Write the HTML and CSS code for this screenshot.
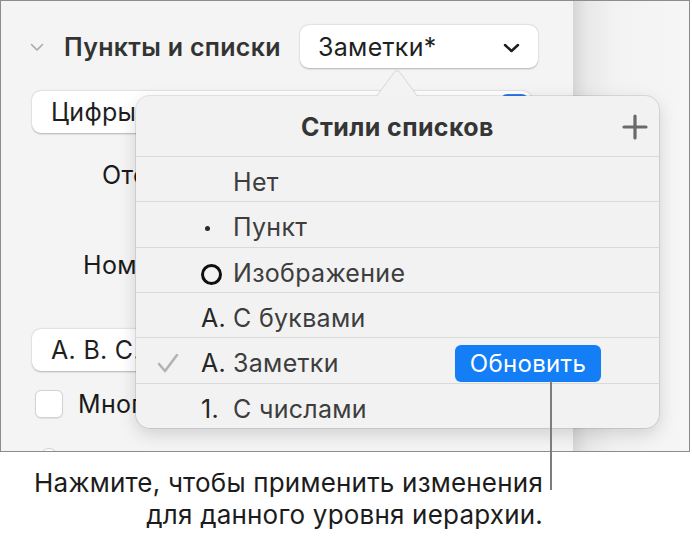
FILE: index.html
```html
<!DOCTYPE html>
<html lang="ru">
<head>
<meta charset="utf-8">
<title>Стили списков</title>
<link rel="stylesheet" href="styles.css">
</head>
<body>
<div class="page">
  <div class="frame">
    <div class="sidebar">
      <div class="row-head">
        <svg class="disclosure" width="14" height="9" viewBox="0 0 14 9"><path d="M1.5 1.5 L7 7 L12.5 1.5" fill="none" stroke="#a9a9a9" stroke-width="1.6" stroke-linecap="round" stroke-linejoin="round"/></svg>
        <span class="section-title">Пункты и списки</span>
        <div class="popup popup-style">
          <span>Заметки*</span>
          <svg class="popup-chevron" width="17" height="10" viewBox="0 0 17 10"><path d="M2 2 L8.5 8 L15 2" fill="none" stroke="#1e1e1e" stroke-width="2.5" stroke-linecap="round" stroke-linejoin="round"/></svg>
        </div>
      </div>
      <div class="row-type">
        <div class="popup popup-type">
          <span>Цифры</span>
          <span class="popup-blue"></span>
        </div>
      </div>
      <div class="label label-indent">Отступ</div>
      <div class="label label-num">Номер</div>
      <div class="row-format">
        <div class="popup popup-format"><span>А. В. С.</span></div>
      </div>
      <div class="row-check">
        <span class="checkbox"></span>
        <span class="check-label">Много</span>
      </div>
      <div class="row-radio"><span class="radio"></span></div>
    </div>
    <div class="canvas"></div>

    <div class="popover">
      <svg class="popover-arrow" width="42" height="28" viewBox="0 0 42 28"><path d="M0 28 L18 3.5 Q21 0 24 3.5 L42 28 Z" fill="#f3f3f3" stroke="#d6d6d6" stroke-width="1"/><rect x="0" y="27" width="42" height="2" fill="#f3f3f3"/></svg>
      <div class="pop-header">
        <span class="pop-title">Стили списков</span>
        <svg class="plus" width="26" height="26" viewBox="0 0 26 26"><path d="M13 2 V24 M2 13 H24" stroke="#6a6a6a" stroke-width="3.2" stroke-linecap="round"/></svg>
      </div>
      <div class="pop-row"><span class="c-check"></span><span class="c-mark"></span><span class="c-label">Нет</span></div>
      <div class="pop-row"><span class="c-check"></span><span class="c-mark"><span class="bullet"></span></span><span class="c-label">Пункт</span></div>
      <div class="pop-row"><span class="c-check"></span><span class="c-mark"><span class="ring"></span></span><span class="c-label">Изображение</span></div>
      <div class="pop-row"><span class="c-check"></span><span class="c-mark">А.</span><span class="c-label">С буквами</span></div>
      <div class="pop-row">
        <span class="c-check"><svg width="22" height="20" viewBox="0 0 22 20"><path d="M2 11 L8 18 L20 2" fill="none" stroke="#b3b3b3" stroke-width="2.6" stroke-linecap="round" stroke-linejoin="round"/></svg></span>
        <span class="c-mark">А.</span><span class="c-label">Заметки</span>
        <span class="update-btn">Обновить</span>
      </div>
      <div class="pop-row last"><span class="c-check"></span><span class="c-mark">1.</span><span class="c-label">С числами</span></div>
    </div>
  </div>
  <div class="leader"></div>
  <div class="callout">Нажмите, чтобы применить изменения<br>для данного уровня иерархии.</div>
</div>
</body>
</html>
```
FILE: styles.css
```css
* { box-sizing: border-box; }
html, body { margin: 0; padding: 0; background: #ffffff; }
body { font-family: Inter, "Noto Sans", "Liberation Sans", sans-serif; color: #1d1d1d; }

.page { position: relative; width: 692px; height: 545px; }

.frame {
  position: relative;
  width: 690px;
  height: 452px;
  border: 1px solid #8c8c8c;
  display: flex;
  overflow: hidden;
}

.sidebar {
  width: 572px;
  background: #f4f4f4;
  display: flex;
  flex-direction: column;
  flex-shrink: 0;
}

.canvas {
  flex: 1;
  background: linear-gradient(to right, #d6d6d6 0px, #e8e8e8 14px, #f2f2f2 40px, #f6f6f6 100%);
}

.row-head {
  margin-top: 24px;
  height: 43px;
  display: flex;
  align-items: center;
  padding-left: 29px;
}
.disclosure { flex-shrink: 0; margin-top: 1px; }
.section-title {
  margin-left: 20px;
  font-size: 25px;
  letter-spacing: 0.3px;
  font-weight: 600;
  color: #333333;
  width: 236px;
  white-space: nowrap;
}

.popup {
  background: #ffffff;
  border-radius: 9px;
  box-shadow: 0 0.5px 2px rgba(0,0,0,0.28);
  display: flex;
  align-items: center;
  font-size: 25px;
  letter-spacing: 0.3px;
  color: #1f1f1f;
  position: relative;
  white-space: nowrap;
}
.popup-style {
  width: 238px;
  height: 43px;
  padding: 0 18px 0 18px;
  justify-content: space-between;
}
.popup-chevron { margin-top: 3px; }

.row-type { margin-top: 23px; height: 42px; padding-left: 31px; }
.popup-type { width: 500px; height: 42px; padding-left: 19px; }
.popup-blue {
  position: absolute;
  right: 4px;
  top: 3px;
  width: 27px;
  height: 36px;
  border-radius: 6px;
  background: #2f7ff3;
}

.label {
  font-size: 25px;
  letter-spacing: 0.3px;
  line-height: 30px;
  height: 30px;
  color: #1a1a1a;
  white-space: nowrap;
}
.label-indent { margin-top: 27px; padding-left: 101px; }
.label-num { margin-top: 60px; padding-left: 82px; }

.row-format { margin-top: 49px; padding-left: 31px; }
.popup-format { width: 260px; height: 42px; padding-left: 19px; }

.row-check {
  margin-top: 19px;
  padding-left: 34px;
  display: flex;
  align-items: center;
  height: 28px;
}
.checkbox {
  width: 28px;
  height: 28px;
  flex-shrink: 0;
  border-radius: 6px;
  background: #ffffff;
  border: 1px solid #d2d2d2;
  box-shadow: 0 0.5px 1px rgba(0,0,0,0.08);
}
.check-label {
  margin-left: 15px;
  font-size: 25px;
  letter-spacing: 0.3px;
  color: #1a1a1a;
  white-space: nowrap;
}

.row-radio { margin-top: 30px; padding-left: 39px; }
.radio {
  display: block;
  width: 18px;
  height: 18px;
  border-radius: 50%;
  border: 1px solid #cfcfcf;
  background: #ffffff;
}

/* Popover */
.popover {
  position: absolute;
  left: 135px;
  top: 95px;
  width: 523px;
  height: 332px;
  background: #f2f2f2;
  border-radius: 14px;
  box-shadow: 0 0 0 1px rgba(0,0,0,0.09), 0 6px 18px rgba(0,0,0,0.15);
  display: flex;
  flex-direction: column;
}
.popover-arrow {
  position: absolute;
  left: 240px;
  top: -27px;
}
.pop-header {
  height: 61px;
  flex-shrink: 0;
  border-bottom: 1px solid #d9d9d9;
  display: flex;
  align-items: center;
  justify-content: center;
  position: relative;
}
.pop-title { font-size: 25px; letter-spacing: 0.4px; font-weight: 700; color: #353535; margin-top: 2px; }
.plus { position: absolute; right: 11px; top: 18px; }

.pop-row {
  flex: 1;
  display: flex;
  align-items: center;
  border-bottom: 1px solid #dadada;
  font-size: 25px;
  letter-spacing: 0.3px;
  color: #3d3d3d;
  padding-top: 6px;
  padding-right: 58px;
}
.pop-row.last { border-bottom: none; }
.c-check { width: 65px; flex-shrink: 0; display: flex; align-items: center; padding-left: 21px; }
.c-mark { width: 32px; flex-shrink: 0; color: #262626; display: flex; align-items: center; white-space: nowrap; }
.bullet {
  display: block;
  width: 5px;
  height: 5px;
  border-radius: 50%;
  background: #2a2a2a;
  margin-left: 4px;
  margin-top: 2px;
}
.ring {
  display: block;
  width: 21px;
  height: 21px;
  border: 3px solid #0f0f0f;
  border-radius: 50%;
  margin-top: 4px;
}
.c-label { white-space: nowrap; }

.update-btn {
  margin-left: auto;
  height: 37px;
  width: 146px;
  border-radius: 6px;
  background: #137ef6;
  color: #ffffff;
  font-size: 24px;
  letter-spacing: 0.3px;
  display: flex;
  align-items: center;
  justify-content: center;
}

.leader {
  position: absolute;
  left: 550px;
  top: 381px;
  width: 2px;
  height: 109px;
  background: #7d7d7d;
}

.callout {
  margin-top: 15px;
  width: 543px;
  text-align: right;
  font-size: 26px;
  letter-spacing: 0.2px;
  line-height: 32px;
  color: #1c1c1c;
  white-space: nowrap;
}
```
